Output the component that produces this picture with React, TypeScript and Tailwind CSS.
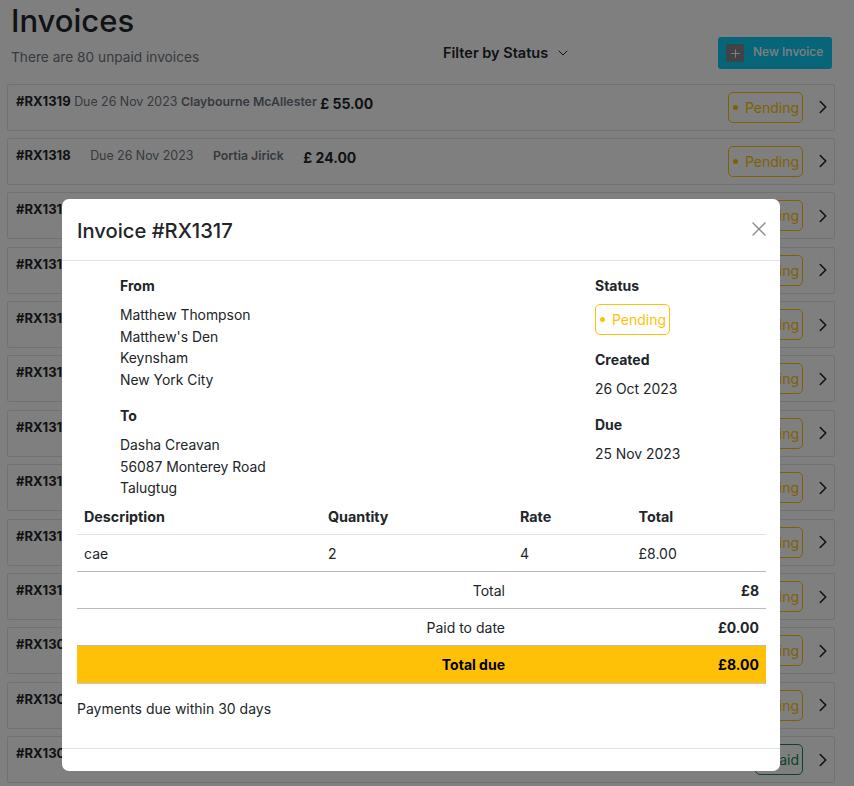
import { ChevronDown, ChevronRight, Plus, X } from "lucide-react";

const invoices = [
  { id: "#RX1319", due: "Due 26 Nov 2023", name: "Claybourne McAllester", amount: "£ 55.00", status: "Pending", tight: true },
  { id: "#RX1318", due: "Due 26 Nov 2023", name: "Portia Jirick", amount: "£ 24.00", status: "Pending" },
  { id: "#RX1317", due: "Due 25 Nov 2023", name: "Dasha Creavan", amount: "£ 8.00", status: "Pending" },
  { id: "#RX1316", due: "Due 25 Nov 2023", name: "Ford Hallam", amount: "£ 31.00", status: "Pending" },
  { id: "#RX1315", due: "Due 24 Nov 2023", name: "Mina Oakes", amount: "£ 12.00", status: "Pending" },
  { id: "#RX1314", due: "Due 24 Nov 2023", name: "Aldo Brandt", amount: "£ 40.00", status: "Pending" },
  { id: "#RX1313", due: "Due 23 Nov 2023", name: "Lena Voss", amount: "£ 18.00", status: "Pending" },
  { id: "#RX1312", due: "Due 23 Nov 2023", name: "Omar Reyes", amount: "£ 66.00", status: "Pending" },
  { id: "#RX1311", due: "Due 22 Nov 2023", name: "Tess Marlow", amount: "£ 27.00", status: "Pending" },
  { id: "#RX1310", due: "Due 22 Nov 2023", name: "Ivor Pryce", amount: "£ 15.00", status: "Pending" },
  { id: "#RX1309", due: "Due 21 Nov 2023", name: "Nell Carey", amount: "£ 52.00", status: "Pending" },
  { id: "#RX1308", due: "Due 21 Nov 2023", name: "Hugo Lind", amount: "£ 9.00", status: "Pending" },
  { id: "#RX1307", due: "Due 20 Nov 2023", name: "Rhea Stone", amount: "£ 73.00", status: "Paid" },
];

function StatusBadge({ status }: { status: string }) {
  if (status === "Paid") {
    return (
      <span className="flex h-[31px] w-[48px] items-center justify-end rounded-[5px] border border-[#198754] pr-[3px] text-[14px] text-[#198754]">
        {status}
      </span>
    );
  }
  return (
    <span className="flex h-[31px] w-[75px] items-center rounded-[5px] border border-[#ffc107] pl-[3.5px] text-[14px] text-[#ffc107]">
      <span className="mr-[7.5px] h-[5px] w-[5px] rounded-full bg-[#ffc107]" />
      {status}
    </span>
  );
}

function InvoiceRow({ invoice }: { invoice: (typeof invoices)[number] }) {
  return (
    <div className="flex h-[47px] items-start rounded-[2px] border border-[#dee2e6] pl-[8px]">
      <div className={`mt-[7px] flex items-start leading-[19px] ${invoice.tight ? "gap-[3.5px]" : "gap-[19.5px]"}`}>
        <span className="text-[13px] font-bold text-[#212529]">{invoice.id}</span>
        <span className="text-[12.4px] text-[#6c757d]">{invoice.due}</span>
        <span className="text-[12.3px] font-semibold text-[#6c757d]">{invoice.name}</span>
        <span className="mt-[2px] text-[14px] font-bold text-[#212529]">{invoice.amount}</span>
      </div>
      <div className="ml-auto mt-[7px] flex items-center gap-[9px]">
        <StatusBadge status={invoice.status} />
        <ChevronRight className="h-[22px] w-[22px] text-[#212529]" strokeWidth={1.75} />
      </div>
    </div>
  );
}

function Field({ label, lines }: { label: string; lines: string[] }) {
  return (
    <div>
      <p className="text-[14px] font-bold leading-[21px] text-[#212529]">{label}</p>
      <div className="mt-[9px] text-[13.9px] leading-[21.5px] text-[#212529]">
        {lines.map((line) => (
          <p key={line}>{line}</p>
        ))}
      </div>
    </div>
  );
}

function InvoiceModal() {
  return (
    <div className="fixed inset-0 bg-black/50">
      <div className="absolute left-[62px] top-[199px] h-[572px] w-[718px] rounded-[7px] bg-white">
        <div className="flex h-[62px] items-center justify-between border-b border-[#dee2e6] pl-[15px] pr-[9px]">
          <h5 className="pt-[3px] text-[20.2px] font-medium text-[#212529]">Invoice #RX1317</h5>
          <X className="mb-[2px] h-[24px] w-[24px] text-[#8a8a8a]" strokeWidth={1.4} />
        </div>
        <div className="pl-[15px] pr-[14px]">
          <div className="flex h-[241px] pl-[43px] pt-[14px]">
            <div className="w-[475px]">
              <Field label="From" lines={["Matthew Thompson", "Matthew's Den", "Keynsham", "New York City"]} />
              <div className="mt-[14px]">
                <Field label="To" lines={["Dasha Creavan", "56087 Monterey Road", "Talugtug"]} />
              </div>
            </div>
            <div>
              <p className="text-[14px] font-bold leading-[21px] text-[#212529]">Status</p>
              <div className="mt-[8px]">
                <StatusBadge status="Pending" />
              </div>
              <div className="mt-[14px]">
                <Field label="Created" lines={["26 Oct 2023"]} />
              </div>
              <div className="mt-[13px]">
                <Field label="Due" lines={["25 Nov 2023"]} />
              </div>
            </div>
          </div>
          <div className="text-[14px] text-[#212529]">
            <div className="grid h-[33px] grid-cols-[244px_192px_118.5px_1fr] items-center border-b border-[#dee2e6] px-[7px] pb-[2px] text-[14.3px] font-bold">
              <span>Description</span>
              <span>Quantity</span>
              <span>Rate</span>
              <span>Total</span>
            </div>
            <div className="grid h-[37px] grid-cols-[244px_192px_118.5px_1fr] items-center border-b border-[#b9bcbf] px-[7px] pt-[1px]">
              <span>cae</span>
              <span>2</span>
              <span>4</span>
              <span>£8.00</span>
            </div>
            <div className="flex h-[37px] items-center border-b border-[#b9bcbf] pr-[7px] pt-[1px]">
              <span className="w-[428px] text-right">Total</span>
              <span className="ml-auto font-bold">£8</span>
            </div>
            <div className="flex h-[37px] items-center border-b border-[#b9bcbf] pr-[7px] pt-[1px]">
              <span className="w-[428px] text-right">Paid to date</span>
              <span className="ml-auto font-bold">£0.00</span>
            </div>
            <div className="flex h-[38px] items-center border-b border-[#c4c6c9] bg-[#ffc107] pr-[7px] font-bold text-black">
              <span className="w-[428px] text-right">Total due</span>
              <span className="ml-auto">£8.00</span>
            </div>
          </div>
          <p className="mt-[14px] text-[14px] leading-[21px] text-[#212529]">Payments due within 30 days</p>
        </div>
        <div className="mt-[29px] border-t border-[#dee2e6]" />
      </div>
    </div>
  );
}

export default function App() {
  return (
    <div className="h-[786px] overflow-hidden bg-white font-['Inter',sans-serif] text-[#212529]">
      <div className="pl-[7px] pr-[19px]">
        <div className="relative h-[83.5px] pl-[4px]">
          <h1 className="pt-[2px] text-[31px] font-medium leading-[38px]">Invoices</h1>
          <p className="mt-[7px] text-[13.7px] leading-[21px] text-[#6c757d]">There are 80 unpaid invoices</p>
          <div className="absolute left-[436px] top-[42px] flex items-center gap-[7px] text-[14.5px] font-semibold">
            Filter by Status
            <ChevronDown className="h-[16px] w-[16px]" strokeWidth={1.5} />
          </div>
          <button className="absolute right-[3px] top-[37px] flex h-[32px] w-[114px] items-center rounded-[3px] bg-[#0dcaf0] pb-[2px] pl-[8px] text-[12px] font-medium text-white">
            <span className="mr-[9px] mt-[2px] grid h-[18px] w-[18px] place-items-center rounded-[2px] bg-[#7e8690] text-white">
              <Plus className="h-[13px] w-[13px]" />
            </span>
            New Invoice
          </button>
        </div>
        <div className="flex flex-col gap-[7.4px]">
          {invoices.map((invoice) => (
            <InvoiceRow key={invoice.id} invoice={invoice} />
          ))}
        </div>
      </div>
      <InvoiceModal />
    </div>
  );
}
